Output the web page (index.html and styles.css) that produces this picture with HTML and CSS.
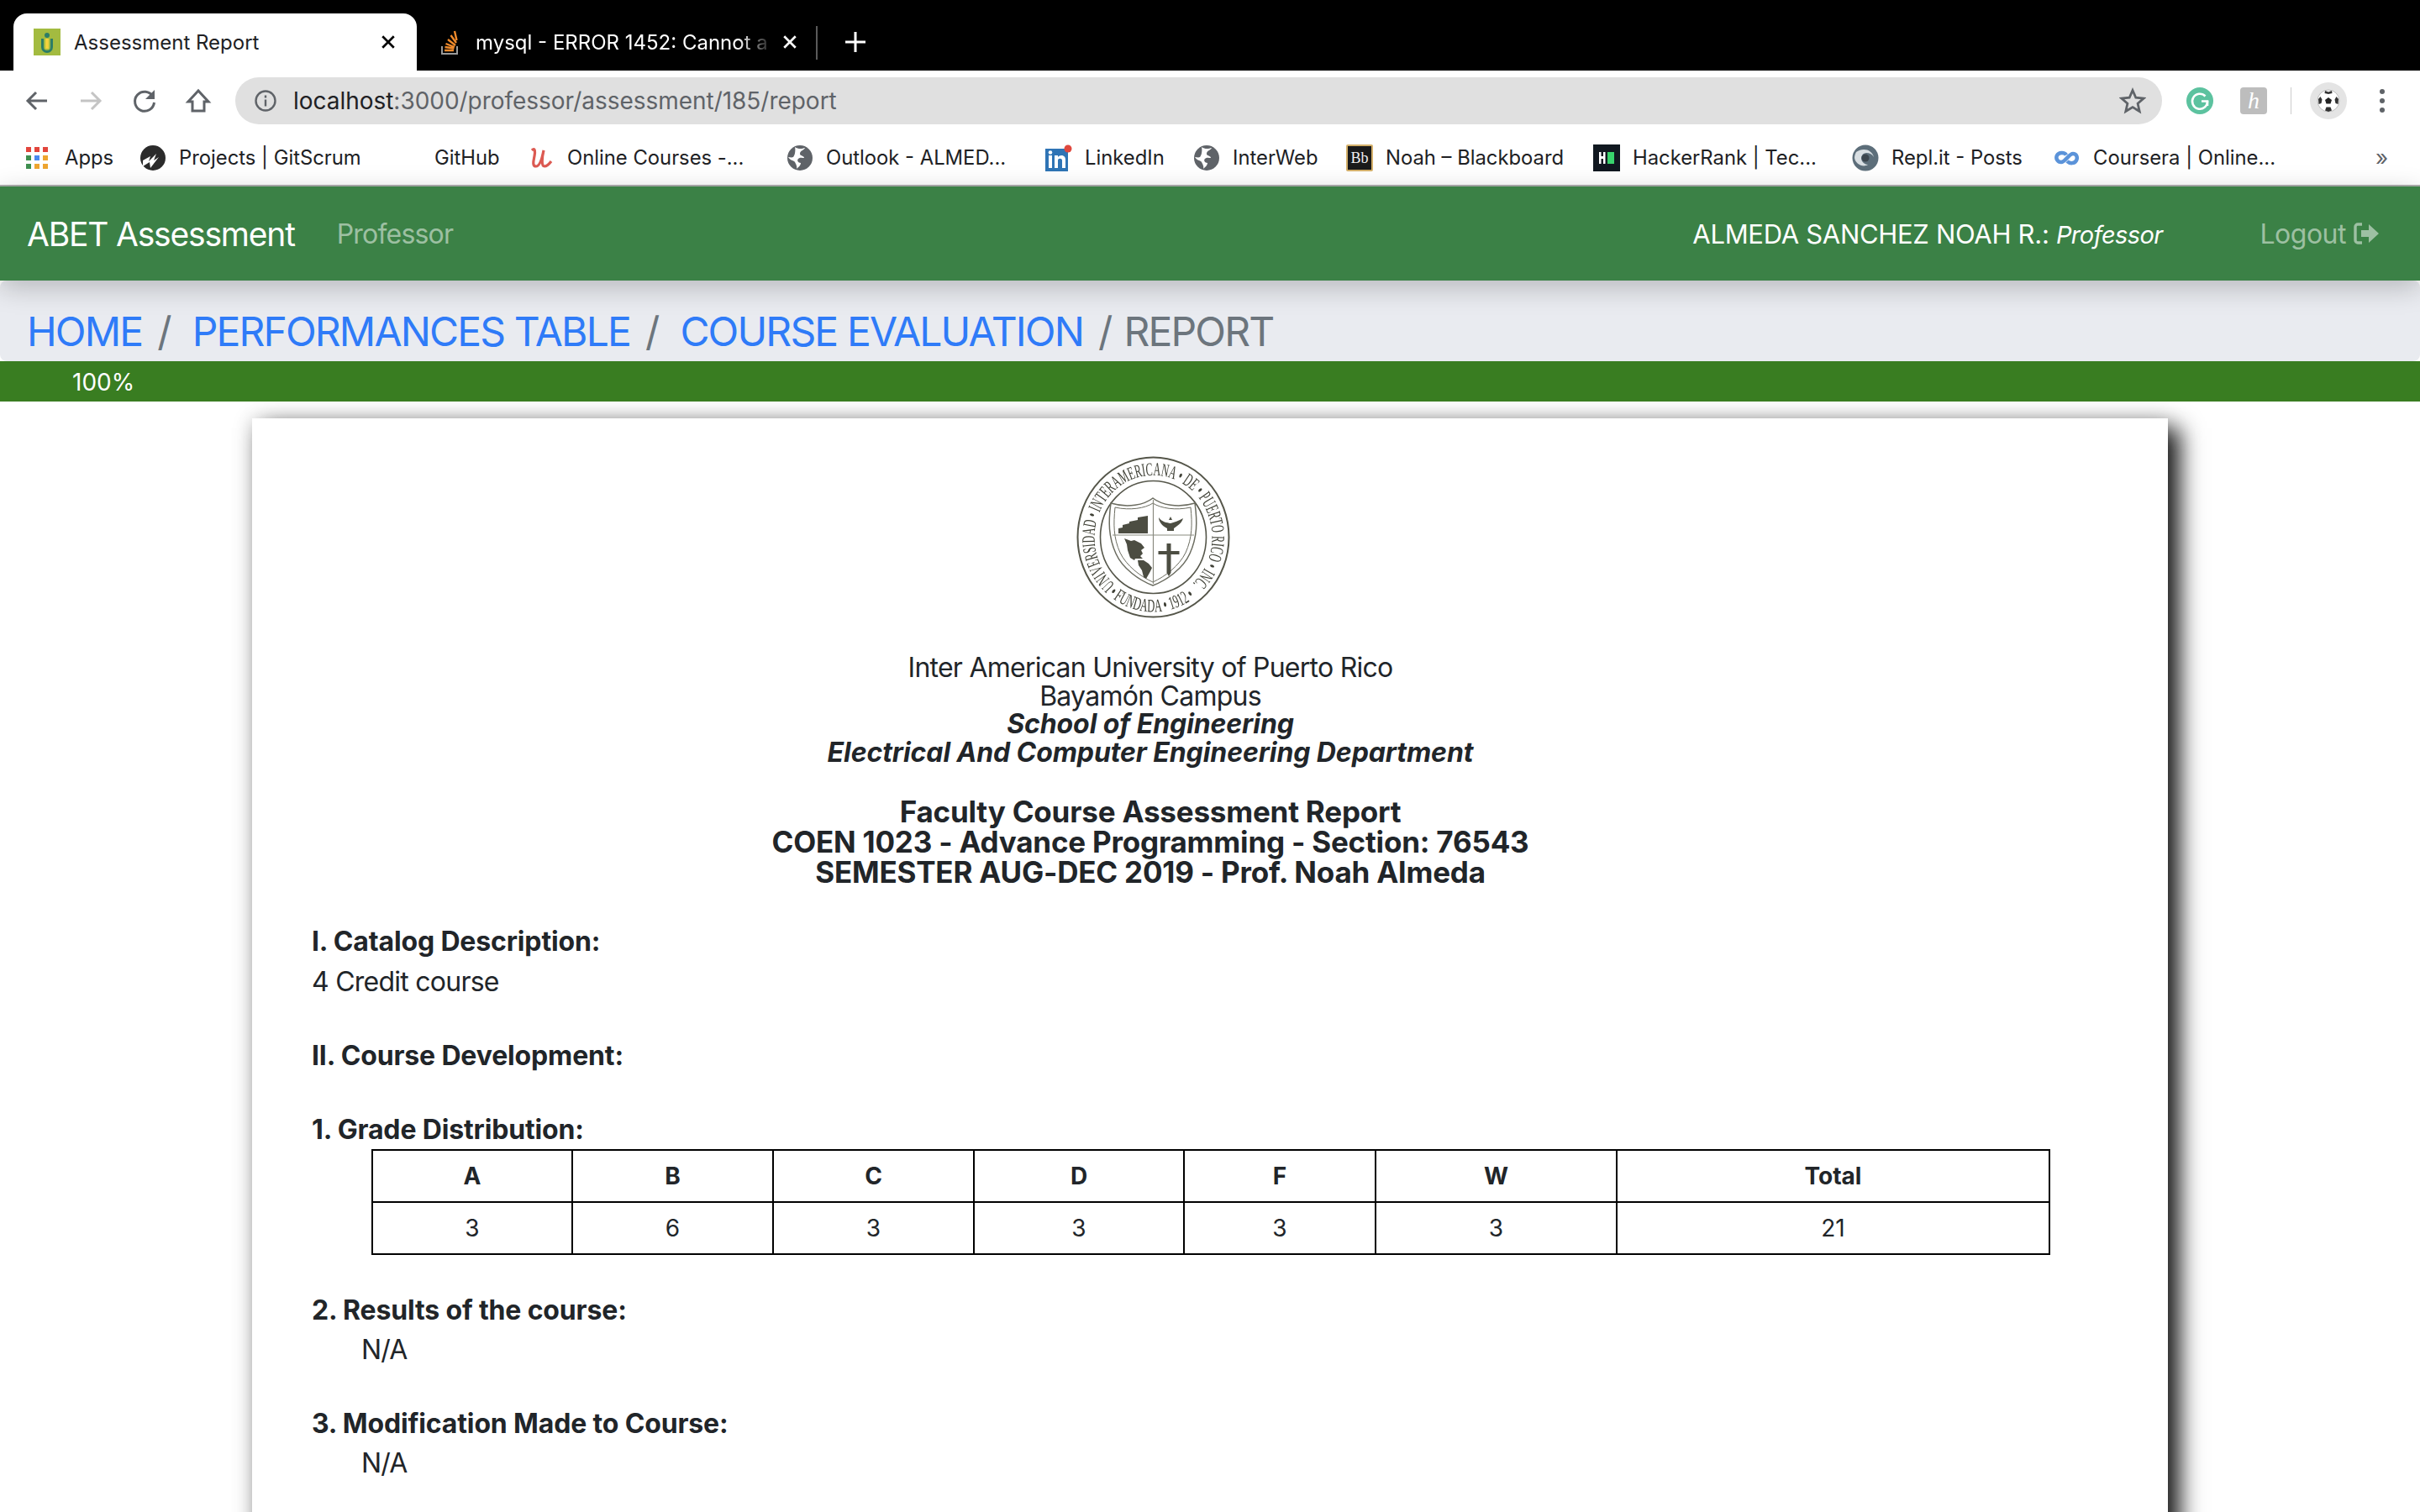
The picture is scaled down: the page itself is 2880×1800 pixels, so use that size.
FILE: index.html
```html
<!DOCTYPE html>
<html lang="en">
<head>
  <meta charset="UTF-8" />
  <title>Assessment Report</title>
  <link rel="stylesheet" href="styles.css">
</head>
<body>
  <!-- browser chrome -->
  <div class="tabstrip">
    <div class="tab tab-active">
      <svg class="fav" viewBox="0 0 32 32"><rect width="32" height="32" fill="#a3bb40"/><circle cx="16" cy="8" r="3" fill="#2c7d66"/><path d="M9 12v10a7 7 0 0 0 14 0V12h-3v10a4 4 0 0 1-8 0V12z" fill="#2c7d66"/><rect x="14" y="12" width="4" height="12" fill="#f2d23c"/></svg>
      <span class="tab-title">Assessment Report</span>
      <svg class="tab-close" viewBox="0 0 16 16"><path d="M2 2l12 12M14 2L2 14" stroke="#000" stroke-width="2.4"/></svg>
    </div>
    <div class="tab tab-other">
      <svg class="fav fav-so" viewBox="0 0 20 32"><path d="M1 21v9h18v-9" fill="none" stroke="#9a9a9a" stroke-width="2"/><path d="M4 26h11M4.500 22l11 1.500M5.500 18l10.500 4M8 13l9 7M11.500 8l6.500 9M16 3l2.500 11" stroke="#ef8a2b" stroke-width="2.400" fill="none"/></svg>
      <span class="tab-title">mysql - ERROR 1452: Cannot a</span>
      <svg class="tab-close" viewBox="0 0 16 16"><path d="M2 2l12 12M14 2L2 14" stroke="#fff" stroke-width="2.4"/></svg>
    </div>
    <div class="tab-sep"></div>
    <svg class="tab-new" viewBox="0 0 26 26"><path d="M13 1v24M1 13h24" stroke="#fff" stroke-width="3"/></svg>
  </div>

  <div class="toolbar">
    <div class="nav-icons">
      <svg viewBox="0 0 32 32"><path d="M28 16H6M15 6L5 16l10 10" fill="none" stroke="#5f6368" stroke-width="3"/></svg>
      <svg viewBox="0 0 32 32"><path d="M4 16h22M17 6l10 10-10 10" fill="none" stroke="#c4c4c4" stroke-width="3"/></svg>
      <svg viewBox="0 0 32 32"><path d="M26 11a11.500 11.500 0 1 0 1.500 7" fill="none" stroke="#5f6368" stroke-width="3"/><path d="M28 3v11H17z" fill="#5f6368"/></svg>
      <svg viewBox="0 0 32 32"><path d="M16 4L4 17h5v11h14V17h5z" fill="none" stroke="#5f6368" stroke-width="3"/></svg>
    </div>
    <div class="omnibox">
      <svg class="info" viewBox="0 0 28 28"><circle cx="14" cy="14" r="11.500" fill="none" stroke="#5f6368" stroke-width="2.400"/><path d="M14 12.500v8M14 7.500v3" stroke="#5f6368" stroke-width="2.400"/></svg>
      <span class="url"><span class="url-host">localhost</span>:3000/professor/assessment/185/report</span>
      <svg class="star" viewBox="0 0 32 32"><path d="M16 3.500l3.800 8.700 9.400.9-7.100 6.200 2.100 9.200L16 23.600l-8.200 4.900 2.100-9.200-7.100-6.200 9.400-.9z" fill="none" stroke="#5f6368" stroke-width="2.800"/></svg>
    </div>
    <div class="ext-icons">
      <svg class="ext" viewBox="0 0 32 32"><circle cx="16" cy="16" r="16" fill="#5cc29f"/><path d="M22.500 10.500A9 9 0 1 0 25 16.500h-7" fill="none" stroke="#fff" stroke-width="2.600"/><path d="M25 22v-6" stroke="#fff" stroke-width="2.600"/></svg>
      <div class="ext-honey">h</div>
      <div class="ext-sep"></div>
      <div class="avatar">
        <svg viewBox="0 0 28 28"><circle cx="14" cy="14" r="13" fill="#fff" stroke="#bbb"/><path d="M14 10l4 2.900-1.500 4.700h-5l-1.500-4.700z" fill="#222"/><path d="M10 2l4 1.500L18 2l.5 3-4.500 1-4.500-1zM2 12l2.500-3 2 3.500L5.500 17l-3 1zM26 12l-2.500-3-2 3.500 1 4.500 3 1zM10 25.500l1.500-4h5l1.500 4-4 1.500z" fill="#333"/></svg>
      </div>
      <svg class="dots" viewBox="0 0 8 32"><circle cx="4" cy="5" r="3" fill="#5f6368"/><circle cx="4" cy="16" r="3" fill="#5f6368"/><circle cx="4" cy="27" r="3" fill="#5f6368"/></svg>
    </div>
  </div>

  <div class="bookmarks">
    <div class="bm">
      <svg class="bm-icon" viewBox="0 0 26 26"><path d="M0 0h6v6H0z" fill="#e2453c"/><path d="M10 0h6v6h-6z" fill="#e2453c"/><path d="M20 0h6v6h-6z" fill="#e2453c"/><path d="M0 10h6v6H0z" fill="#3f8f4f"/><path d="M10 10h6v6h-6z" fill="#4a89ef"/><path d="M20 10h6v6h-6z" fill="#eea530"/><path d="M0 20h6v6H0z" fill="#3f8f4f"/><path d="M10 20h6v6h-6z" fill="#eea530"/><path d="M20 20h6v6h-6z" fill="#eea530"/></svg>
      <span>Apps</span>
    </div>
    <div class="bm">
      <svg class="bm-icon" viewBox="0 0 32 32"><circle cx="16" cy="16" r="15" fill="#2b2b2b"/><path d="M4 19l9-5-2 6 9-9-3 8 6-4-10 13-1-7-8 5z" fill="#fff"/></svg>
      <span>Projects | GitScrum</span>
    </div>
    <div class="bm">
      <span class="bm-icon"></span>
      <span>GitHub</span>
    </div>
    <div class="bm">
      <svg class="bm-icon" viewBox="0 0 32 32"><path d="M5 7C9 3 9 9 8 14c-1 5-3 12 2 12 4 0 7-9 9-19-2 8-3 19 1 19 3 0 5-2 8-6" fill="none" stroke="#dc5a52" stroke-width="3.200"/></svg>
      <span>Online Courses -...</span>
    </div>
    <div class="bm">
      <svg class="bm-icon" viewBox="0 0 32 32"><use href="#globe"/></svg>
      <span>Outlook - ALMED...</span>
    </div>
    <div class="bm">
      <svg class="bm-icon" viewBox="0 0 32 32"><rect y="5" width="27" height="27" fill="#2f74b5"/><rect x="4" y="13" width="4" height="15" fill="#fff"/><circle cx="6" cy="9.500" r="2.300" fill="#fff"/><path d="M11 13h4v2c2-3 9-3 9 3v10h-4v-9c0-3-5-3-5 0v9h-4z" fill="#fff"/><circle cx="27" cy="5" r="4.500" fill="#e0483e"/></svg>
      <span>LinkedIn</span>
    </div>
    <div class="bm">
      <svg class="bm-icon" viewBox="0 0 32 32"><use href="#globe"/></svg>
      <span>InterWeb</span>
    </div>
    <div class="bm">
      <svg class="bm-icon" viewBox="0 0 32 32"><rect x="1" y="1" width="30" height="30" rx="1" fill="#1a1a1a" stroke="#d4b06a" stroke-width="2"/><text x="16" y="22" class="bb-text">Bb</text></svg>
      <span>Noah – Blackboard</span>
    </div>
    <div class="bm">
      <svg class="bm-icon" viewBox="0 0 32 32"><rect width="32" height="32" fill="#111820"/><path d="M7 9h2.500v5h2.500V9h2.500v14H12v-6H9.500v6H7z" fill="#fff"/><rect x="17" y="9" width="8" height="14" fill="#39d36c"/></svg>
      <span>HackerRank | Tec...</span>
    </div>
    <div class="bm">
      <svg class="bm-icon" viewBox="0 0 32 32"><circle cx="16" cy="16" r="15.500" fill="#5d6e7a"/><path d="M5 9c8-6 19-3 21 6-3-5-11-7-14-2-3 4 1 11 7 11-6 4-15-1-16-8 0-3 1-5 2-7z" fill="#d8dee2"/><circle cx="16" cy="16" r="4.500" fill="#3b454d"/></svg>
      <span>Repl.it - Posts</span>
    </div>
    <div class="bm">
      <svg class="bm-icon" viewBox="0 0 32 32"><path d="M15 12.500C13 9 6 9 4 13c-2 4 1 8 5 8 5 0 9-10 14-10 4 0 6 4 4 8-2 4-8 4-11 1" fill="none" stroke="#5b93d9" stroke-width="4.500"/></svg>
      <span>Coursera | Online...</span>
    </div>
    <div class="bm-more">»</div>
  </div>

  <svg class="defs" aria-hidden="true">
    <symbol id="globe" viewBox="0 0 32 32"><circle cx="16" cy="16" r="15" fill="#5f6368"/><path d="M10 3c4 3 9 2 12 1-1 3-6 3-6 7 0 3 5 2 5 5-2 0-5-1-7 1-2 2 0 5 3 5 0 3-3 5-5 7 1-3-1-6-2-8s-6-2-8-6c2 0 4 1 6 0 2-2 3-8 2-12z" fill="#fff"/></symbol>
  </svg>

  <!-- app -->
  <nav class="navbar">
    <a class="brand">ABET Assessment</a>
    <a class="nav-link">Professor</a>
    <span class="nav-user">ALMEDA SANCHEZ NOAH R.: <em>Professor</em></span>
    <a class="nav-logout">Logout
      <svg viewBox="0 0 32 28"><path d="M11 3H6a3 3 0 0 0-3 3v16a3 3 0 0 0 3 3h5" fill="none" stroke="currentColor" stroke-width="3.400"/><path d="M10 10h9V3l12 11-12 11v-7h-9z" fill="currentColor"/></svg>
    </a>
  </nav>

  <ol class="breadcrumb">
    <li><a>HOME</a></li>
    <li><a>PERFORMANCES TABLE</a></li>
    <li><a>COURSE EVALUATION</a></li>
    <li class="current">REPORT</li>
  </ol>

  <div class="progress">100%</div>

  <div class="content">
    <main class="report">
      <div class="report-head">
        <svg class="seal" viewBox="0 0 183 193" preserveAspectRatio="none">
          <defs>
            <path id="sealTop" d="M46 153A70 74 0 1 1 137 153"/>
            <path id="sealBottom" d="M38 165A84 89 0 0 0 145 165"/>
          </defs>
          <ellipse cx="91.500" cy="96.500" rx="90" ry="95" fill="none" stroke="#55564a" stroke-width="2"/>
          <ellipse cx="91.500" cy="96.500" rx="63" ry="67" fill="none" stroke="#55564a" stroke-width="1.600"/>
          <text class="seal-text"><textPath href="#sealTop" textLength="350" lengthAdjust="spacingAndGlyphs">UNIVERSIDAD • INTERAMERICANA • DE • PUERTO RICO • INC.</textPath></text>
          <text class="seal-text"><textPath href="#sealBottom" textLength="112" lengthAdjust="spacingAndGlyphs">• FUNDADA • 1912 •</textPath></text>
          <path d="M41 56c20 6 40 2 50-6 10 8 30 12 50 6 3 22 3 40-6 60-8 18-28 32-44 38-16-6-36-20-44-38-9-20-9-38-6-60z" fill="none" stroke="#6b6c60" stroke-width="1.500"/>
          <path d="M46 61c18 4 36 1 45-5 9 6 27 9 45 5 2 20 2 36-6 54-8 16-24 28-39 35-15-7-31-19-39-35-8-18-8-34-6-54z" fill="none" stroke="#6b6c60" stroke-width="1"/>
          <path d="M43 94h97M91.500 52v100" stroke="#8a8b80" stroke-width="1.200"/>
          <path d="M50 92v-6l5-1v-3l8-2v-2l10-2v-3l12-2v21z" fill="#4c4d42"/>
          <path d="M98 73c4 6 10 6 14 7 4-1 10-3 15-6-1 4-4 7-7 9l-4 3v3h-8v-3c-6-3-10-8-10-13z" fill="#4c4d42"/>
          <path d="M110 76l2-4 2 4z" fill="#4c4d42"/>
          <path d="M57 98l8 3 4-1 8 4 4 5-4 3 2 4-3 3 3 3h-5l-4 0-1 2-5-3-3-9-1-7zM73 124l7 0 6 4 4 5-3 6-4 7-3-2-2-8-4-6z" fill="#4c4d42"/>
          <path d="M107.500 104h5v9h10v4h-10v22l-2.500 4-2.500-4v-22h-10v-4h10z" fill="#4c4d42"/>
        </svg>
        <div class="school">
          Inter American University of Puerto Rico<br>
          Bayamón Campus<br>
          <b><i>School of Engineering</i></b><br>
          <b><i>Electrical And Computer Engineering Department</i></b>
        </div>
        <div class="course-title">
          Faculty Course Assessment Report<br>
          COEN 1023 - Advance Programming - Section: 76543<br>
          SEMESTER AUG-DEC 2019 - Prof. Noah Almeda
        </div>
      </div>

      <h6 class="sec-first">I. Catalog Description:</h6>
      <p class="sec-text">4 Credit course</p>
      <h6 class="sec-dev">II. Course Development:</h6>
      <h6 class="sec-grade">1. Grade Distribution:</h6>
      <table class="grades">
        <tr><th>A</th><th>B</th><th>C</th><th>D</th><th>F</th><th>W</th><th>Total</th></tr>
        <tr><td>3</td><td>6</td><td>3</td><td>3</td><td>3</td><td>3</td><td>21</td></tr>
      </table>
      <h6 class="sec-results">2. Results of the course:</h6>
      <p class="sec-text sec-indent">N/A</p>
      <h6 class="sec-dev">3. Modification Made to Course:</h6>
      <p class="sec-text sec-indent">N/A</p>
    </main>
  </div>
</body>
</html>
```

FILE: styles.css
```css
:root {
  --font: Inter, "Noto Sans", sans-serif;
  --text: #212529;
  --ink: #202124;
}

* {
  box-sizing: border-box;
}

html, body {
  height: 1800px;
  overflow: hidden;
}

body {
  margin: 0;
  background: #fff;
  font-family: var(--font);
  color: var(--text);
}

.defs {
  position: absolute;
  width: 0;
  height: 0;
}

/* tabs */
.tabstrip {
  height: 84px;
  background: #000;
  display: flex;
  align-items: flex-end;
  padding-left: 16px;
}

.tab {
  height: 68px;
  display: flex;
  align-items: center;
  font-size: 24px;
}

.tab-active {
  width: 480px;
  padding: 0 25px 0 24px;
  background: #fff;
  color: var(--ink);
  border-radius: 16px 16px 0 0;
}

.tab-other {
  width: 475px;
  padding: 0 22px 0 29px;
  color: #fff;
}

.fav {
  width: 32px;
  height: 32px;
  flex: none;
}

.fav-so {
  width: 20px;
}

.tab-title {
  flex: 1;
  margin-left: 16px;
  white-space: nowrap;
  overflow: hidden;
}

.tab-other .tab-title {
  margin-left: 21px;
  -webkit-mask-image: linear-gradient(to right, #000 88%, transparent 100%);
  mask-image: linear-gradient(to right, #000 88%, transparent 100%);
}

.tab-close {
  width: 18px;
  height: 18px;
  flex: none;
  margin-left: 10px;
}

.tab-sep {
  width: 2px;
  height: 40px;
  background: #5a5a5a;
  margin-bottom: 13px;
}

.tab-new {
  width: 26px;
  height: 26px;
  margin: 0 0 21px 32px;
}

/* toolbar */
.toolbar {
  height: 82px;
  padding-top: 8px;
  display: flex;
  align-items: flex-start;
}

.nav-icons {
  width: 280px;
  height: 56px;
  padding-left: 28px;
  display: flex;
  align-items: center;
  gap: 32px;
}

.nav-icons svg {
  width: 32px;
  height: 32px;
}

.omnibox {
  width: 2293px;
  height: 56px;
  padding: 0 19px 0 22px;
  background: #e0e0e0;
  border-radius: 28px;
  display: flex;
  align-items: center;
}

.info {
  width: 28px;
  height: 28px;
  flex: none;
}

.url {
  flex: 1;
  margin-left: 19px;
  font-size: 28px;
  letter-spacing: -0.03px;
  color: #5f6368;
  white-space: nowrap;
}

.url-host {
  color: var(--ink);
}

.star {
  width: 32px;
  height: 32px;
}

.ext-icons {
  flex: 1;
  height: 56px;
  display: flex;
  align-items: center;
  padding-left: 29px;
}

.ext {
  width: 32px;
  height: 32px;
}

.ext-honey {
  width: 32px;
  height: 32px;
  margin-left: 32px;
  background: #bdbdbd;
  border-radius: 4px;
  color: #fff;
  font: italic 28px/32px "Liberation Serif", serif;
  text-align: center;
}

.ext-sep {
  width: 1px;
  height: 32px;
  margin-left: 28px;
  background: #ccc;
}

.avatar {
  width: 44px;
  height: 44px;
  margin-left: 22px;
  padding: 8px;
  background: #e4e4e4;
  border-radius: 50%;
}

.avatar svg {
  display: block;
  width: 28px;
  height: 28px;
}

.dots {
  width: 8px;
  height: 32px;
  margin-left: 38px;
}

/* bookmarks bar */
.bookmarks {
  height: 56px;
  padding: 0 0 11px 31px;
  border-bottom: 2px solid #aeaeae;
  display: grid;
  grid-template-columns: 135px 304px 158px 308px 308px 176px 182px 294px 308px 240px 388px 30px;
  align-items: center;
  font-size: 23.800px;
  color: var(--ink);
}

.bm {
  display: flex;
  align-items: center;
  gap: 15px;
  white-space: nowrap;
}

.bm-icon {
  width: 32px;
  height: 32px;
  flex: none;
}

.bm:first-child .bm-icon {
  width: 26px;
  height: 26px;
}

.bm:first-child {
  gap: 20px;
}

.bb-text {
  fill: #eee;
  font: 18px "Liberation Serif", serif;
  text-anchor: middle;
}

.bm-more {
  margin-left: -5px;
  color: #5f6368;
  font-size: 26px;
}

/* navbar */
.navbar {
  position: relative;
  z-index: 2;
  height: 112px;
  padding: 0 48px 0 32px;
  background: #3b8146;
  box-shadow: 0 8px 30px rgba(0, 0, 0, 0.22);
  display: flex;
  align-items: center;
}

.brand {
  color: #fff;
  font-size: 39px;
  letter-spacing: -1.2px;
}

.nav-link {
  margin-left: 50px;
  color: rgba(255, 255, 255, 0.5);
  font-size: 32px;
  letter-spacing: -0.8px;
}

.nav-user {
  margin-left: auto;
  color: #fff;
  font-size: 31px;
  letter-spacing: -0.3px;
  white-space: nowrap;
}

.nav-user em {
  font-size: 29px;
  letter-spacing: -0.6px;
}

.nav-logout {
  margin-left: 116px;
  display: flex;
  align-items: center;
  gap: 8px;
  color: rgba(255, 255, 255, 0.5);
  font-size: 32px;
  letter-spacing: -0.5px;
}

.nav-logout svg {
  width: 32px;
  height: 28px;
}

/* breadcrumb */
.breadcrumb {
  height: 96px;
  margin: 0;
  padding: 26px 0 0 32px;
  list-style: none;
  background: #e9ebf0;
  border-radius: 8px;
  display: flex;
  font-size: 48px;
  letter-spacing: -1.85px;
  line-height: 70px;
  white-space: nowrap;
}

.breadcrumb a {
  color: #2f7bf8;
}

.breadcrumb li + li::before {
  content: "/";
  padding: 0 26px 0 18px;
  color: #6c757d;
}

.breadcrumb .current {
  color: #6c757d;
}

.breadcrumb li.current::before {
  padding-right: 15px;
}

.progress {
  height: 48px;
  padding-left: 86px;
  background: #397d21;
  color: #fff;
  font-size: 28px;
  line-height: 50px;
}

/* report card */
.content {
  height: 1322px;
  padding-top: 20px;
  overflow: hidden;
}

.report {
  width: 2280px;
  height: 1400px;
  margin-left: 300px;
  padding: 45px 0 0 71px;
  background: #fff;
  box-shadow: 0 0 24px rgba(0, 0, 0, 0.16), 14px 12px 26px rgba(0, 0, 0, 0.9);
}

.report-head {
  width: 1996px;
  text-align: center;
}

.seal {
  display: block;
  width: 183px;
  height: 193px;
  margin: 0 auto 42px;
  position: relative;
  left: 3px;
  filter: blur(0.4px);
}

.seal-text {
  fill: #3f4036;
  font: 22px "Liberation Serif", serif;
}

.school {
  font-size: 32px;
  letter-spacing: -0.75px;
  line-height: 33.600px;
}

.school b {
  letter-spacing: -0.1px;
}

.course-title {
  margin-top: 36px;
  font-size: 35px;
  font-weight: 700;
  letter-spacing: -0.2px;
  line-height: 36px;
}

h6 {
  margin: 0;
  font-size: 32px;
  font-weight: 700;
  letter-spacing: -0.15px;
  line-height: 40px;
}

.sec-text {
  margin: 8px 0 0;
  font-size: 32px;
  letter-spacing: -0.75px;
  line-height: 40px;
}

.sec-indent {
  margin-top: 7px;
  padding-left: 59px;
}

.sec-first {
  margin-top: 45px;
}

.sec-dev {
  margin-top: 48px;
}

.sec-grade {
  margin-top: 48px;
}

.sec-results {
  margin-top: 46px;
}

.grades {
  width: 1998px;
  margin: 3px 0 0 71px;
  border-collapse: collapse;
  table-layout: fixed;
  font-size: 28px;
  text-align: center;
}

.grades th, .grades td {
  height: 62px;
  padding: 0;
  border: 2px solid #000;
}

.grades th:nth-child(1) { width: 238px; }
.grades th:nth-child(2) { width: 239px; }
.grades th:nth-child(3) { width: 239px; }
.grades th:nth-child(4) { width: 250px; }
.grades th:nth-child(5) { width: 228px; }
.grades th:nth-child(6) { width: 287px; }
```
